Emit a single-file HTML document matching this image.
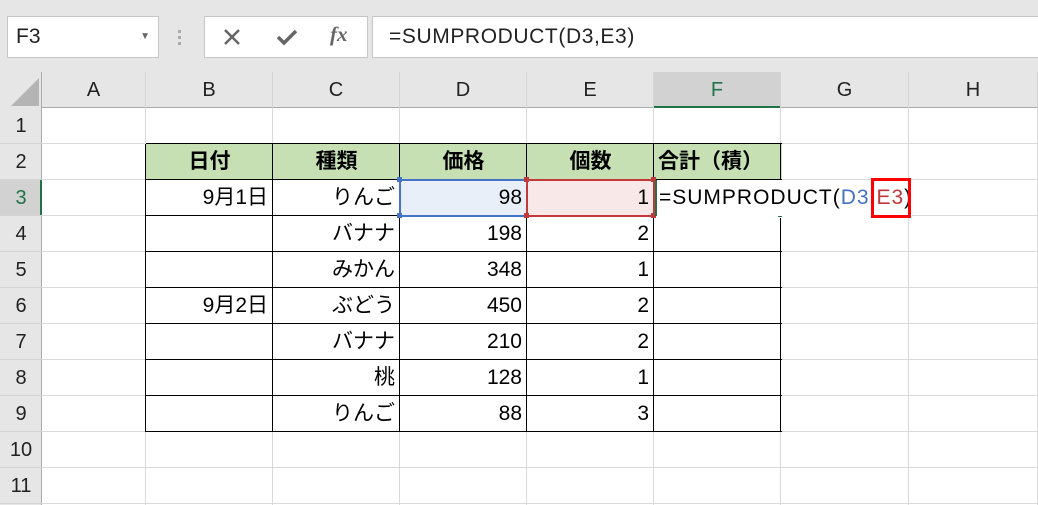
<!DOCTYPE html><html><head><meta charset="utf-8"><style>
body{margin:0;width:1038px;height:505px;overflow:hidden;background:#fff;font-family:"Liberation Sans","Noto Sans CJK JP",sans-serif;position:relative}
.a{position:absolute;box-sizing:border-box}
.t{font-size:21px;color:#000;line-height:36px;white-space:nowrap}
.h{font-size:20px;color:#222;text-align:center;line-height:36px}
</style></head><body>
<div class="a" style="left:0;top:0;width:1038px;height:72px;background:#e6e6e6"></div>
<div class="a" style="left:7px;top:16px;width:152px;height:42px;background:#fff;border:1px solid #c6c6c6;font-size:21px;line-height:40px;padding-left:8px;color:#222">F3<span style="position:absolute;right:8px;top:0;font-size:10px;color:#666">▼</span></div>
<div class="a" style="left:178px;top:30px;width:3px;height:3px;background:#aaa;box-shadow:0 6px #aaa,0 12px #aaa"></div>
<div class="a" style="left:204px;top:16px;width:164px;height:42px;background:#fff;border:1px solid #c6c6c6"></div>
<svg class="a" style="left:222px;top:27px" width="20" height="20"><path d="M3 3L17 17M17 3L3 17" stroke="#666" stroke-width="2.5"/></svg>
<svg class="a" style="left:275px;top:27px" width="24" height="20"><path d="M3 10L9 16L21 4" stroke="#666" stroke-width="3.5" fill="none"/></svg>
<div class="a" style="left:330px;top:22px;font-family:'Liberation Serif',serif;font-style:italic;font-weight:bold;font-size:21px;color:#666">fx</div>
<div class="a" style="left:372px;top:16px;width:670px;height:42px;background:#fff;border:1px solid #c6c6c6;font-size:21px;line-height:40px;padding-left:16px;color:#222;letter-spacing:0.6px">=SUMPRODUCT(D3,E3)</div>
<div class="a" style="left:0;top:72px;width:1038px;height:36px;background:#e6e6e6;border-bottom:1px solid #ababab"></div>
<div class="a" style="left:0;top:72px;width:42px;height:433px;background:#e6e6e6;border-right:1px solid #ababab"></div>
<svg class="a" style="left:10px;top:77px" width="30" height="30"><path d="M29 1V29H1Z" fill="#b4b4b4"/></svg>
<div class="a" style="left:654px;top:72px;width:127px;height:36px;background:#d2d2d2;border-bottom:2px solid #217346"></div>
<div class="a" style="left:0;top:180px;width:42px;height:36px;background:#d2d2d2;border-right:2px solid #217346"></div>
<div id="g"></div>
<script>
var cols=[42,146,273,400,527,654,781,909,1038],L="ABCDEFGH",s="";
for(var i=0;i<8;i++){s+='<div class="a h" style="left:'+cols[i]+'px;top:72px;width:'+(cols[i+1]-cols[i])+'px;height:36px;border-right:1px solid #d4d4d4;'+(i==5?'color:#217346':'')+'">'+L[i]+'</div>';
s+='<div class="a" style="left:'+(cols[i+1]-1)+'px;top:108px;width:1px;height:397px;background:#d9d9d9"></div>';}
for(var r=1;r<=11;r++){var y=108+(r-1)*36;s+='<div class="a h" style="left:0;top:'+y+'px;width:42px;height:36px;border-bottom:1px solid #d4d4d4;'+(r==3?'color:#217346':'')+'">'+r+'</div>';
s+='<div class="a" style="left:42px;top:'+(y+35)+'px;width:996px;height:1px;background:#d9d9d9"></div>';}
var d=[["","りんご","98","1"],["","バナナ","198","2"],["","みかん","348","1"],["9月2日","ぶどう","450","2"],["","バナナ","210","2"],["","桃","128","1"],["","りんご","88","3"]];
d[0][0]="9月1日";
s+='<div class="a" style="left:146px;top:144px;width:636px;height:36px;background:#c6e0b4"></div>';
s+='<div class="a" style="left:400px;top:180px;width:127px;height:36px;background:#e8eff9"></div>';
s+='<div class="a" style="left:527px;top:180px;width:127px;height:36px;background:#f9e8e8"></div>';
var hd=["日付","種類","価格","個数","合計（積）"];
for(var i=0;i<5;i++)s+='<div class="a t" style="left:'+cols[i+1]+'px;top:144px;width:127px;text-align:'+(i==4?'left;padding-left:4px':'center')+';font-weight:bold">'+hd[i]+'</div>';
for(var r=0;r<7;r++)for(var c=0;c<4;c++)s+='<div class="a t" style="left:'+cols[c+1]+'px;top:'+(180+r*36)+'px;width:127px;text-align:right;padding-right:5px">'+d[r][c]+'</div>';
for(var r=0;r<=8;r++)s+='<div class="a" style="left:146px;top:'+(143+r*36)+'px;width:636px;height:1px;background:#000"></div>';
for(var i=1;i<=6;i++)s+='<div class="a" style="left:'+(cols[i]-1)+'px;top:144px;width:1px;height:288px;background:#000"></div>';
document.getElementById('g').outerHTML=s;
</script>
<div class="a" style="left:655px;top:180px;width:126px;height:36px;background:#fff"></div>
<div class="a" style="left:399px;top:179px;width:129px;height:38px;border:2px solid #4472c4"></div>
<div class="a" style="left:526px;top:179px;width:129px;height:38px;border:2px solid #c0393b"></div>
<div class="a" style="left:397px;top:177px;width:5px;height:5px;background:#4472c4;box-shadow:0 36px #4472c4"></div>
<div class="a" style="left:524px;top:177px;width:5px;height:5px;background:#c0393b;box-shadow:0 36px #c0393b,127px 0 #c0393b,127px 36px #c0393b"></div>
<div class="a" style="left:655px;top:180px;width:2px;height:36px;background:#217346"></div>
<div class="a" style="left:655px;top:180px;width:126px;height:2px;background:#217346"></div>
<div class="a" style="left:655px;top:214px;width:126px;height:2px;background:#217346"></div>
<div class="a" style="left:777px;top:212px;width:6px;height:6px;background:#217346;border:1px solid #fff"></div>
<div class="a t" style="left:657px;top:180px;height:36px;padding-left:2px;background:#fff;letter-spacing:1px">=SUMPRODUCT(<span style="color:#4472c4">D3</span>,<span style="color:#c0393b">E3</span>)</div>
<div class="a" style="left:871px;top:178px;width:40px;height:40px;border:3px solid #f00"></div>
</body></html>
